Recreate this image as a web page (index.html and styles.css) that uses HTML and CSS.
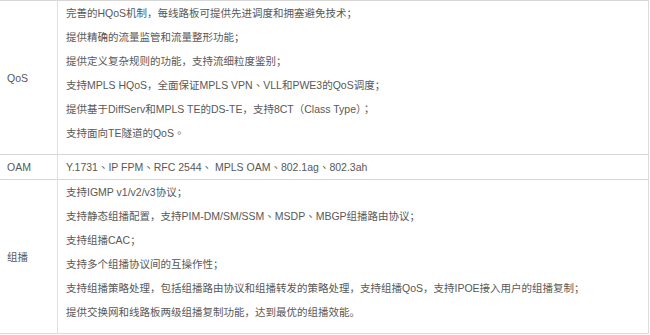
FILE: index.html
```html
<!DOCTYPE html>
<html lang="zh-CN">
<head>
    <meta charset="UTF-8">
    <meta name="viewport" content="width=device-width, initial-scale=1.0">
    <title>业务特性</title>
    <link rel="stylesheet" href="styles.css">
</head>

<body>
    <table class="spec">
        <tr>
            <td class="name">QoS</td>
            <td class="desc multi">
                <p>完善的HQoS机制，每线路板可提供先进调度和拥塞避免技术；</p>
                <p>提供精确的流量监管和流量整形功能；</p>
                <p>提供定义复杂规则的功能，支持流细粒度鉴别；</p>
                <p>支持MPLS HQoS，全面保证MPLS VPN、VLL和PWE3的QoS调度；</p>
                <p>提供基于DiffServ和MPLS TE的DS-TE，支持8CT（Class Type）；</p>
                <p>支持面向TE隧道的QoS。</p>
            </td>
        </tr>
        <tr>
            <td class="name">OAM</td>
            <td class="desc">Y.1731、IP FPM、RFC 2544、 MPLS OAM、802.1ag、802.3ah</td>
        </tr>
        <tr>
            <td class="name">组播</td>
            <td class="desc multi">
                <p>支持IGMP v1/v2/v3协议；</p>
                <p>支持静态组播配置，支持PIM-DM/SM/SSM、MSDP、MBGP组播路由协议；</p>
                <p>支持组播CAC；</p>
                <p>支持多个组播协议间的互操作性；</p>
                <p>支持组播策略处理，包括组播路由协议和组播转发的策略处理，支持组播QoS，支持IPOE接入用户的组播复制；</p>
                <p>提供交换网和线路板两级组播复制功能，达到最优的组播效能。</p>
            </td>
        </tr>
    </table>
</body>
</html>
```

FILE: styles.css
```css
body {
    margin: 0;
    padding: 0;
    background-color: #fff;
    font-family: "Liberation Sans", Arial, "Noto Sans CJK TC", sans-serif;
    font-size: 10.5px;
    color: #585858;
}

.spec {
    width: 649px;
    border-collapse: collapse;
    border-top: 1px solid #dcdcdc;
    border-right: 1px solid #dcdcdc;
    border-bottom: 1px solid #dcdcdc;
}

.spec td {
    border-top: 1px solid #d6d6d6;
    line-height: 24px;
    padding: 0;
}

.spec .name {
    width: 50px;
    padding-left: 7px;
    vertical-align: middle;
    border-right: 1px solid #e0e0e0;
}

.spec .desc {
    padding-left: 8px;
    vertical-align: top;
}

.spec .multi {
    padding-bottom: 9px;
}

.spec p {
    margin: 0;
    line-height: 24px;
}
```
